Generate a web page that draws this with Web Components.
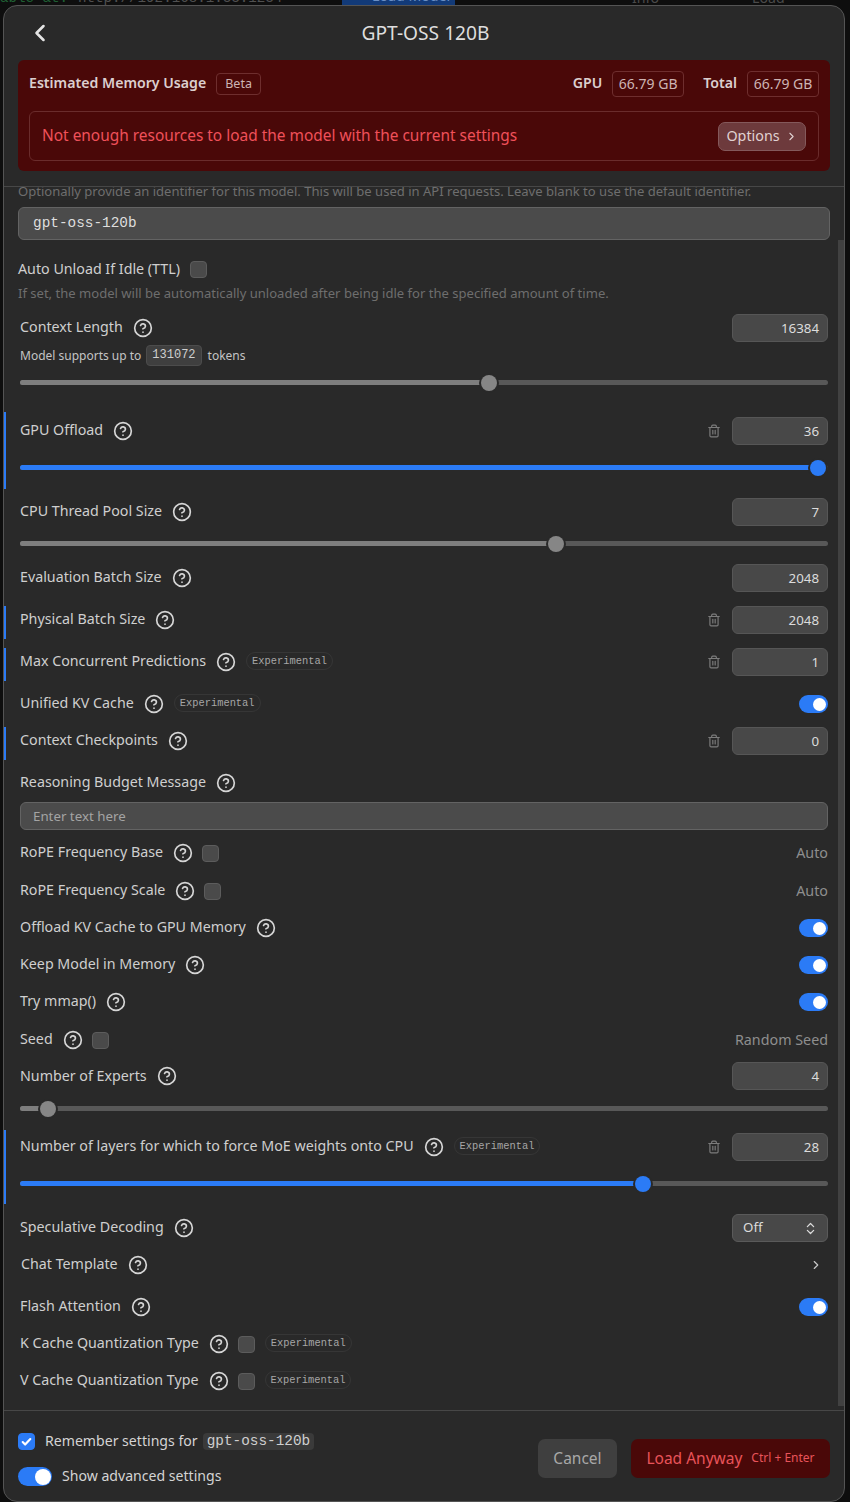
<!DOCTYPE html>
<html>
<head>
<meta charset="utf-8">
<title>GPT-OSS 120B</title>
<style>
html, body {
    background-color: #0e0e0e;
    height: 1502px;
    margin: 0;
    overflow: hidden;
}
body {
    color: #d4d4d4;
    font-family: 'Noto Sans', sans-serif;
    font-size: 14.3px;
}
</style>
</head>
<body>
<page-backdrop></page-backdrop>
<model-dialog title-text="GPT-OSS 120B">
    <memory-banner slot="banner"></memory-banner>

    <plain-note style="margin-top:-5px">Optionally provide an identifier for this model. This will be used in API requests. Leave blank to use the default identifier.</plain-note>
    <text-field style="margin:7px 14px 0; height:33px" mono value="gpt-oss-120b"></text-field>

    <setting-row style="margin-top:17px; padding-left:14px; --row-h:24px; --label-y:-1px" label="Auto Unload If Idle (TTL)" no-help>
        <check-box slot="after"></check-box>
    </setting-row>
    <plain-note style="margin-top:3px">If set, the model will be automatically unloaded after being idle for the specified amount of time.</plain-note>

    <setting-row style="margin-top:12px" label="Context Length">
        <num-box slot="control" value="16384"></num-box>
        <tokens-note value="131072"></tokens-note>
        <range-slider style="margin-top:4px" value="58"></range-slider>
    </setting-row>

    <setting-row style="margin-top:20px; padding-top:5px; padding-bottom:12px" label="GPU Offload" accent trash>
        <num-box slot="control" value="36"></num-box>
        <range-slider style="margin-top:12px" value="98.8" active></range-slider>
    </setting-row>

    <setting-row style="margin-top:9px" label="CPU Thread Pool Size">
        <num-box slot="control" value="7"></num-box>
        <range-slider style="margin-top:7px" value="66.3"></range-slider>
    </setting-row>

    <setting-row style="margin-top:11px" label="Evaluation Batch Size">
        <num-box slot="control" value="2048"></num-box>
    </setting-row>
    <setting-row style="margin-top:14px; padding-bottom:5px" label="Physical Batch Size" accent trash>
        <num-box slot="control" value="2048"></num-box>
    </setting-row>
    <setting-row style="margin-top:9px; padding-bottom:5px" label="Max Concurrent Predictions" experimental accent trash>
        <num-box slot="control" value="1"></num-box>
    </setting-row>
    <setting-row style="margin-top:9px" label="Unified KV Cache" experimental>
        <toggle-switch slot="control"></toggle-switch>
    </setting-row>
    <setting-row style="margin-top:9px; padding-bottom:5px" label="Context Checkpoints" accent trash>
        <num-box slot="control" value="0"></num-box>
    </setting-row>

    <setting-row style="margin-top:9px" label="Reasoning Budget Message">
        <text-field style="margin-top:5px; height:28px" placeholder="Enter text here"></text-field>
    </setting-row>

    <setting-row style="margin-top:9px" label="RoPE Frequency Base">
        <check-box slot="after"></check-box>
        <muted-value slot="control">Auto</muted-value>
    </setting-row>
    <setting-row style="margin-top:10px" label="RoPE Frequency Scale">
        <check-box slot="after"></check-box>
        <muted-value slot="control">Auto</muted-value>
    </setting-row>
    <setting-row style="margin-top:9px" label="Offload KV Cache to GPU Memory">
        <toggle-switch slot="control"></toggle-switch>
    </setting-row>
    <setting-row style="margin-top:9px" label="Keep Model in Memory">
        <toggle-switch slot="control"></toggle-switch>
    </setting-row>
    <setting-row style="margin-top:9px" label="Try mmap()">
        <toggle-switch slot="control"></toggle-switch>
    </setting-row>
    <setting-row style="margin-top:10px" label="Seed">
        <check-box slot="after"></check-box>
        <muted-value slot="control">Random Seed</muted-value>
    </setting-row>

    <setting-row style="margin-top:8px; --label-y:-2px" label="Number of Experts">
        <num-box slot="control" value="4"></num-box>
        <range-slider style="margin-top:8px" value="3.5"></range-slider>
    </setting-row>

    <setting-row style="margin-top:12px; padding-top:3px; padding-bottom:11px" label="Number of layers for which to force MoE weights onto CPU" experimental accent trash>
        <num-box slot="control" value="28"></num-box>
        <range-slider style="margin-top:12px" value="77.1" active></range-slider>
    </setting-row>

    <setting-row style="margin-top:10px" label="Speculative Decoding">
        <select-box slot="control" value="Off"></select-box>
    </setting-row>
    <setting-row style="margin-top:9px; padding-left:17px" label="Chat Template">
        <chevron-link slot="control"></chevron-link>
    </setting-row>
    <setting-row style="margin-top:14px" label="Flash Attention">
        <toggle-switch slot="control"></toggle-switch>
    </setting-row>
    <setting-row style="margin-top:9px" label="K Cache Quantization Type" experimental>
        <check-box slot="after"></check-box>
    </setting-row>
    <setting-row style="margin-top:9px" label="V Cache Quantization Type" experimental>
        <check-box slot="after"></check-box>
    </setting-row>

    <dialog-footer slot="footer"></dialog-footer>
</model-dialog>

<script>
// Shared icon strings
const icons = {
    help: `<svg viewBox="0 0 24 24" fill="none" stroke="currentColor" stroke-width="2" stroke-linecap="round" stroke-linejoin="round"><circle cx="12" cy="12" r="10"/><path d="M9.09 9a3 3 0 0 1 5.83 1c0 2-3 3-3 3"/><path d="M12 17h.01"/></svg>`,
    trash: `<svg viewBox="0 0 24 24" fill="none" stroke="currentColor" stroke-width="2" stroke-linecap="round" stroke-linejoin="round"><path d="M3 6h18"/><path d="M19 6v14a2 2 0 0 1-2 2H7a2 2 0 0 1-2-2V6"/><path d="M8 6V4a2 2 0 0 1 2-2h4a2 2 0 0 1 2 2v2"/><path d="M10 11v6"/><path d="M14 11v6"/></svg>`,
    right: `<svg viewBox="0 0 24 24" fill="none" stroke="currentColor" stroke-width="2" stroke-linecap="round" stroke-linejoin="round"><path d="m9 18 6-6-6-6"/></svg>`,
    left: `<svg viewBox="0 0 24 24" fill="none" stroke="currentColor" stroke-width="2.2" stroke-linecap="round" stroke-linejoin="round"><path d="m15 18-6-6 6-6"/></svg>`,
    updown: `<svg viewBox="0 0 24 24" fill="none" stroke="currentColor" stroke-width="2" stroke-linecap="round" stroke-linejoin="round"><path d="m7 15 5 5 5-5"/><path d="m7 9 5-5 5 5"/></svg>`,
    check: `<svg viewBox="0 0 24 24" fill="none" stroke="currentColor" stroke-width="4" stroke-linecap="round" stroke-linejoin="round"><path d="M5 13l4.5 4.5L19 7.5"/></svg>`
};

function defineSimple(name, css, html) {
    const template = document.createElement('template');
    template.innerHTML = `<style>${css}</style>${html}`;

    customElements.define(name, class extends HTMLElement {
        constructor() {
            super();
            this.attachShadow({mode: 'open'});
            this.shadowRoot.append(template.content.cloneNode(true));
        }

        connectedCallback() {
            const value = this.shadowRoot.querySelector('[data-value]');
            if(value)
                value.textContent = this.getAttribute('value');
        }
    });
}

defineSimple('page-backdrop', `
:host {
    display: flex;
    height: 5px;
    overflow: hidden;
}
span {
    color: #505050;
    flex-shrink: 0;
    font-family: 'Liberation Mono', monospace;
    font-size: 14.2px;
    line-height: 14px;
    margin-top: -9px;
    white-space: nowrap;
}
.green { color: #1f5f33; width: 78px; }
.url { width: 264px; }
.load {
    background-color: #123a78;
    box-sizing: border-box;
    color: #6b8fc4;
    font-family: 'Noto Sans', sans-serif;
    height: 16px;
    margin-top: -11px;
    padding-left: 30px;
    width: 113px;
}
.info { color: #4a4a4a; font-family: 'Noto Sans', sans-serif; margin-left: 177px; width: 120px; }
.save { color: #4a4a4a; font-family: 'Noto Sans', sans-serif; }
`, `<span class="green">able at:</span><span class="url">http://192.168.1.33:1234</span><span class="load">Load Model</span><span class="info">Info</span><span class="save">Load</span>`);

defineSimple('plain-note', `
:host {
    color: #6e6e6e;
    display: block;
    font-size: 13.05px;
    line-height: 18px;
    padding-left: 14px;
    white-space: nowrap;
}
`, `<slot></slot>`);

defineSimple('num-box', `
:host {
    background-color: #484848;
    border: solid 1px #565656;
    border-radius: 6px;
    box-sizing: border-box;
    color: #dcdcdc;
    display: block;
    font-size: 13.3px;
    height: 28px;
    line-height: 27px;
    padding-right: 8px;
    text-align: right;
    width: 96px;
}
`, `<span data-value></span>`);

defineSimple('select-box', `
:host {
    align-items: center;
    background-color: #484848;
    border: solid 1px #5a5a5a;
    border-radius: 6px;
    box-sizing: border-box;
    color: #dcdcdc;
    display: flex;
    font-size: 13.3px;
    height: 28px;
    justify-content: space-between;
    padding: 0 10px;
    width: 96px;
}
span { margin-top: -2px; }
svg { height: 15px; margin-right: -1px; width: 15px; }
`, `<span data-value></span>${icons.updown}`);

defineSimple('chevron-link', `
:host { color: #c8c8c8; display: block; height: 14px; margin-right: 5px; width: 14px; }
svg { display: block; height: 14px; width: 14px; }
`, icons.right);

defineSimple('muted-value', `
:host { color: #8e8e8e; display: block; font-size: 14.3px; margin-top: -2px; }
`, `<slot></slot>`);

defineSimple('toggle-switch', `
:host {
    align-items: center;
    background-color: #2b7bf6;
    border-radius: 9px;
    box-sizing: border-box;
    display: flex;
    height: 18px;
    justify-content: flex-end;
    padding-right: 2.5px;
    width: 29px;
}
i { background-color: #fff; border-radius: 50%; display: block; height: 13px; width: 13px; }
:host([large]) { border-radius: 10px; height: 19px; padding-right: 1.5px; width: 34px; }
:host([large]) i { height: 16px; width: 16px; }
`, `<i></i>`);

defineSimple('check-box', `
:host {
    align-items: center;
    background-color: #4a4a4a;
    border: solid 1px #5c5c5c;
    border-radius: 4px;
    box-sizing: border-box;
    color: #fff;
    display: flex;
    height: 17px;
    justify-content: center;
    width: 17px;
}
:host([checked]) { background-color: #2b7bf6; border-color: #2b7bf6; }
svg { display: none; height: 13px; width: 13px; }
:host([checked]) svg { display: block; }
`, icons.check);

(function() {
    const template = document.createElement('template');
    template.innerHTML = `
    <style>
    :host {
        display: block;
        height: 20px;
        position: relative;
    }
    .track {
        background-color: #585858;
        border-radius: 3px;
        height: 5px;
        left: 0;
        overflow: hidden;
        position: absolute;
        right: 0;
        top: 8px;
    }
    .fill {
        background-color: #7e7e7e;
        height: 100%;
    }
    .thumb {
        background-color: #868686;
        border-radius: 50%;
        box-shadow: 0 0 0 2px #292929;
        height: 16px;
        margin-left: -8px;
        position: absolute;
        top: 2.5px;
        width: 16px;
    }
    :host([active]) .fill, :host([active]) .thumb {
        background-color: #2b7bf6;
    }
    </style>
    <div class='track'><div class='fill'></div></div>
    <div class='thumb'></div>
    `;

    class RangeSlider extends HTMLElement {
        constructor() {
            super();
            this.attachShadow({mode: 'open'});
            this.shadowRoot.append(template.content.cloneNode(true));
        }

        connectedCallback() {
            const value = this.getAttribute('value') + '%';
            this.shadowRoot.querySelector('.fill').style.width = value;
            this.shadowRoot.querySelector('.thumb').style.left = value;
        }
    }

    customElements.define('range-slider', RangeSlider);
})();

(function() {
    const template = document.createElement('template');
    template.innerHTML = `
    <style>
    :host { display: block; }
    .box {
        align-items: center;
        background-color: #4b4b4b;
        border: solid 1px #636363;
        border-radius: 6px;
        box-sizing: border-box;
        display: flex;
        height: 100%;
        padding-left: 12px;
    }
    .placeholder { color: #a4a4a4; font-size: 13.3px; }
    .mono {
        color: #dedede;
        font-family: 'Liberation Mono', monospace;
        font-size: 14.4px;
        margin-top: -2px;
        padding-left: 2px;
    }
    </style>
    <div class='box'><span class='text'></span></div>
    `;

    class TextField extends HTMLElement {
        constructor() {
            super();
            this.attachShadow({mode: 'open'});
            this.shadowRoot.append(template.content.cloneNode(true));
        }

        connectedCallback() {
            const text = this.shadowRoot.querySelector('.text');
            text.textContent = this.getAttribute('value') || this.getAttribute('placeholder');
            text.classList.add(this.hasAttribute('mono') ? 'mono' : 'placeholder');
        }
    }

    customElements.define('text-field', TextField);
})();

defineSimple('tokens-note', `
:host {
    align-items: center;
    color: #c4c4c4;
    display: flex;
    font-size: 12px;
    height: 26px;
}
code {
    background-color: #3f3f3f;
    border: solid 1px #4c4c4c;
    border-radius: 4px;
    box-sizing: border-box;
    color: #cfcfcf;
    font-family: 'Liberation Mono', monospace;
    font-size: 12px;
    height: 21px;
    line-height: 19px;
    margin: 0 6px 0 5px;
    padding: 0 5px;
}
`, `<span>Model supports up to</span><code data-value></code><span>tokens</span>`);

(function() {
    const template = document.createElement('template');
    template.innerHTML = `
    <style>
    :host {
        display: block;
        padding: 0 16px;
        position: relative;
    }
    :host([accent])::before {
        background-color: #2b7bf6;
        bottom: 0;
        content: '';
        left: 0;
        position: absolute;
        top: 0;
        width: 2px;
    }
    .row {
        align-items: center;
        display: flex;
        height: var(--row-h, 28px);
    }
    .label {
        color: #cfcfcf;
        font-size: 14.25px;
        margin-top: var(--label-y, -3px);
        white-space: nowrap;
    }
    .help {
        color: #d6d6d6;
        height: 20px;
        margin-left: 10px;
        width: 20px;
    }
    .help svg, .trash svg { display: block; height: 100%; width: 100%; }
    .after { display: flex; }
    ::slotted(check-box) { margin-left: 9px; }
    :host([no-help]) ::slotted(check-box) { margin-left: 10px; }
    .chip {
        border: solid 1px #363636;
        border-radius: 9px;
        color: #a6a6a6;
        display: none;
        font-family: 'Liberation Mono', monospace;
        font-size: 10.4px;
        line-height: 16px;
        margin-left: 10px;
        margin-top: -2px;
        padding: 0 5px;
    }
    :host([experimental]) .chip { display: block; }
    .spacer { flex-grow: 1; }
    .trash {
        color: #7c7c7c;
        display: none;
        height: 14px;
        margin-right: 11px;
        width: 14px;
    }
    :host([trash]) .trash { display: block; }
    </style>
    <div class='row'>
        <span class='label'></span>
        <span class='help'>${icons.help}</span>
        <span class='after'><slot name='after'></slot></span>
        <span class='chip'>Experimental</span>
        <span class='spacer'></span>
        <span class='trash'>${icons.trash}</span>
        <slot name='control'></slot>
    </div>
    <slot></slot>
    `;

    class SettingRow extends HTMLElement {
        constructor() {
            super();
            this.attachShadow({mode: 'open'});
            this.shadowRoot.append(template.content.cloneNode(true));
        }

        connectedCallback() {
            this.shadowRoot.querySelector('.label').textContent = this.getAttribute('label');

            if(this.hasAttribute('no-help'))
                this.shadowRoot.querySelector('.help').style.display = 'none';
        }
    }

    customElements.define('setting-row', SettingRow);
})();

defineSimple('memory-banner', `
:host {
    background-color: #4a0808;
    border-radius: 6px;
    box-sizing: border-box;
    display: block;
    height: 111px;
    margin: 0 14px;
    padding: 11px 11px 0;
}
.top {
    align-items: center;
    display: flex;
    height: 26px;
}
.title, .key {
    color: #dccfcf;
    font-size: 14.15px;
    font-weight: 600;
    margin-top: -3px;
    white-space: nowrap;
}
.chip {
    border: solid 1px #6e2e2e;
    border-radius: 4px;
    box-sizing: border-box;
    color: #cdb4b4;
    font-size: 14px;
    line-height: 23px;
    white-space: nowrap;
}
.beta {
    font-size: 12.5px;
    height: 22px;
    line-height: 20px;
    margin-left: 10px;
    padding: 0 8px;
}
.spacer { flex-grow: 1; }
.gb {
    height: 26px;
    margin-left: 10px;
    padding: 0 5px;
    text-align: center;
    width: 72px;
}
.total { margin-left: 19px; }
.alert {
    align-items: center;
    border: solid 1px #6a2c2c;
    border-radius: 6px;
    box-sizing: border-box;
    color: #f0515a;
    display: flex;
    font-size: 15.43px;
    height: 50px;
    justify-content: space-between;
    margin-top: 14px;
    padding: 0 12px;
}
.alert > span:first-child { margin-top: -1px; }
.options {
    align-items: center;
    background-color: #6d3a3c;
    border: solid 1px #84595b;
    border-radius: 7px;
    box-sizing: border-box;
    color: #e0d2d2;
    column-gap: 5px;
    display: flex;
    font-size: 14.3px;
    height: 29px;
    justify-content: center;
    padding-bottom: 2px;
    width: 88px;
}
svg { height: 13px; margin-top: 2px; width: 13px; }
`, `
<div class="top">
    <span class="title">Estimated Memory Usage</span>
    <span class="chip beta">Beta</span>
    <span class="spacer"></span>
    <span class="key">GPU</span>
    <span class="chip gb">66.79 GB</span>
    <span class="key total">Total</span>
    <span class="chip gb">66.79 GB</span>
</div>
<div class="alert">
    <span>Not enough resources to load the model with the current settings</span>
    <span class="options">Options ${icons.right}</span>
</div>
`);

defineSimple('dialog-footer', `
:host {
    align-items: flex-start;
    border-top: solid 1px #474747;
    box-sizing: border-box;
    display: flex;
    height: 91px;
    justify-content: space-between;
    padding: 0 14px;
}
.left {
    display: flex;
    flex-direction: column;
    padding-top: 20px;
    row-gap: 14px;
}
.line {
    align-items: center;
    color: #d4d4d4;
    display: flex;
    font-size: 14.1px;
    height: 21px;
    white-space: nowrap;
}
.line > span { margin-top: -2px; }
check-box { margin-right: 10px; }
toggle-switch { margin-right: 10px; }
code {
    background-color: #3a3a3a;
    border-radius: 4px;
    color: #cfcfcf;
    font-family: 'Liberation Mono', monospace;
    font-size: 14.4px;
    line-height: 17px;
    margin-left: 5px;
    padding: 0 4px;
}
.buttons {
    column-gap: 14px;
    display: flex;
    padding-top: 28px;
}
.button {
    align-items: center;
    border-radius: 7px;
    box-sizing: border-box;
    display: flex;
    font-size: 15.5px;
    height: 39px;
    justify-content: center;
    padding-bottom: 2px;
    white-space: nowrap;
}
.cancel {
    background-color: #3f3f3f;
    color: #a8a8a8;
    width: 79px;
}
.load {
    background-color: #4a0808;
    color: #e8545a;
    width: 199px;
}
kbd {
    font-family: inherit;
    font-size: 12px;
    margin-left: 9px;
}
`, `
<div class="left">
    <div class="line"><check-box checked></check-box><span>Remember settings for</span><code>gpt-oss-120b</code></div>
    <div class="line"><toggle-switch large></toggle-switch><span>Show advanced settings</span></div>
</div>
<div class="buttons">
    <span class="button cancel">Cancel</span>
    <span class="button load">Load Anyway<kbd>Ctrl + Enter</kbd></span>
</div>
`);

(function() {
    const template = document.createElement('template');
    template.innerHTML = `
    <style>
    :host {
        background-color: #292929;
        border: solid 1px #545454;
        border-radius: 14px;
        box-sizing: border-box;
        display: flex;
        flex-direction: column;
        height: 1497px;
        margin-left: 3px;
        overflow: hidden;
        position: relative;
        width: 842px;
    }
    .header {
        align-items: center;
        display: flex;
        height: 54px;
        justify-content: center;
        position: relative;
    }
    .back {
        color: #e4e4e4;
        height: 28px;
        left: 22px;
        position: absolute;
        top: 13px;
        width: 28px;
    }
    .back svg { display: block; height: 100%; width: 100%; }
    h1 {
        color: #dedede;
        font-size: 19.2px;
        font-weight: 400;
        margin: 0 0 2px 3px;
    }
    .body-wrap {
        border-top: solid 1px #474747;
        flex-grow: 1;
        margin-top: 15px;
        min-height: 0;
        position: relative;
    }
    .body {
        height: 100%;
        overflow: hidden;
    }
    .scrollbar {
        background-color: #414141;
        bottom: 4px;
        position: absolute;
        right: 0;
        top: 53px;
        width: 6px;
    }
    </style>
    <div class='header'>
        <span class='back'>${icons.left}</span>
        <h1></h1>
    </div>
    <slot name='banner'></slot>
    <div class='body-wrap'>
        <div class='body'><slot></slot></div>
        <div class='scrollbar'></div>
    </div>
    <slot name='footer'></slot>
    `;

    class ModelDialog extends HTMLElement {
        constructor() {
            super();
            this.attachShadow({mode: 'open'});
            this.shadowRoot.append(template.content.cloneNode(true));
        }

        connectedCallback() {
            this.shadowRoot.querySelector('h1').textContent = this.getAttribute('title-text');
        }
    }

    customElements.define('model-dialog', ModelDialog);
})();
</script>
</body>
</html>
